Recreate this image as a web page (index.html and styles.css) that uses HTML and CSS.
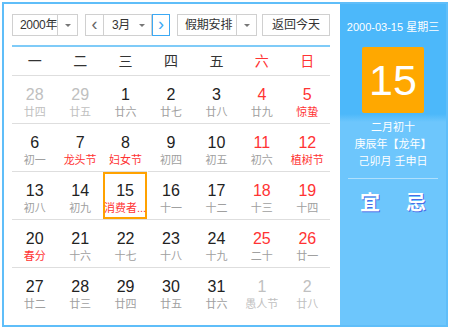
FILE: index.html
```html
<!DOCTYPE html>
<html>
<head>
<meta charset="utf-8">
<link rel="stylesheet" href="styles.css">
</head>
<body>
<div class="cal">
  <div class="main">
    <div class="controls">
      <div class="sel year"><span class="sel-text">2000年</span><span class="arr"></span></div>
      <div class="month-group">
        <span class="nav prev">&lsaquo;</span>
        <div class="sel month"><span class="sel-text">3月</span><span class="arr plain"></span></div>
        <span class="nav next">&rsaquo;</span>
      </div>
      <div class="sel holiday"><span class="sel-text">假期安排</span><span class="arr"></span></div>
      <div class="btn">返回今天</div>
    </div>
    <div class="grid">
      <div class="wk">一</div><div class="wk">二</div><div class="wk">三</div><div class="wk">四</div><div class="wk">五</div><div class="wk red">六</div><div class="wk red">日</div>

      <div class="cell other"><b>28</b><i>廿四</i></div>
      <div class="cell other"><b>29</b><i>廿五</i></div>
      <div class="cell"><b>1</b><i>廿六</i></div>
      <div class="cell"><b>2</b><i>廿七</i></div>
      <div class="cell"><b>3</b><i>廿八</i></div>
      <div class="cell wkend"><b>4</b><i>廿九</i></div>
      <div class="cell wkend"><b>5</b><i class="fest">惊蛰</i></div>

      <div class="cell"><b>6</b><i>初一</i></div>
      <div class="cell"><b>7</b><i class="fest">龙头节</i></div>
      <div class="cell"><b>8</b><i class="fest">妇女节</i></div>
      <div class="cell"><b>9</b><i>初四</i></div>
      <div class="cell"><b>10</b><i>初五</i></div>
      <div class="cell wkend"><b>11</b><i>初六</i></div>
      <div class="cell wkend"><b>12</b><i class="fest">植树节</i></div>

      <div class="cell"><b>13</b><i>初八</i></div>
      <div class="cell"><b>14</b><i>初九</i></div>
      <div class="cell today"><b>15</b><i class="fest">消费者...</i></div>
      <div class="cell"><b>16</b><i>十一</i></div>
      <div class="cell"><b>17</b><i>十二</i></div>
      <div class="cell wkend"><b>18</b><i>十三</i></div>
      <div class="cell wkend"><b>19</b><i>十四</i></div>

      <div class="cell"><b>20</b><i class="fest">春分</i></div>
      <div class="cell"><b>21</b><i>十六</i></div>
      <div class="cell"><b>22</b><i>十七</i></div>
      <div class="cell"><b>23</b><i>十八</i></div>
      <div class="cell"><b>24</b><i>十九</i></div>
      <div class="cell wkend"><b>25</b><i>二十</i></div>
      <div class="cell wkend"><b>26</b><i>廿一</i></div>

      <div class="cell"><b>27</b><i>廿二</i></div>
      <div class="cell"><b>28</b><i>廿三</i></div>
      <div class="cell"><b>29</b><i>廿四</i></div>
      <div class="cell"><b>30</b><i>廿五</i></div>
      <div class="cell"><b>31</b><i>廿六</i></div>
      <div class="cell other"><b>1</b><i>愚人节</i></div>
      <div class="cell other"><b>2</b><i>廿八</i></div>
    </div>
  </div>
  <div class="side">
    <div class="side-date">2000-03-15 星期三</div>
    <div class="big">15</div>
    <div class="lunar">
      <div>二月初十</div>
      <div>庚辰年【龙年】</div>
      <div>己卯月 壬申日</div>
    </div>
    <div class="yiji"><span>宜</span><span>忌</span></div>
  </div>
</div>
</body>
</html>
```

FILE: styles.css
```css
html, body {
  margin: 0;
  padding: 0;
  background: #fff;
}
body {
  font-family: "Liberation Sans", "Noto Sans CJK SC", sans-serif;
  color: #333;
}
.cal {
  margin: 2px;
  width: 446px;
  height: 325px;
  box-sizing: border-box;
  border: 2px solid #5fbef9;
  display: flex;
}
.main {
  width: 336px;
  padding: 10px 0 0 8px;
  box-sizing: border-box;
}
.controls {
  display: flex;
  align-items: center;
  height: 22px;
  width: 318px;
}
.sel {
  display: flex;
  height: 22px;
  box-sizing: border-box;
  border: 1px solid #d0d0d0;
  font-size: 12px;
  line-height: 20px;
  white-space: nowrap;
}
.sel-text {
  flex: 1;
  min-width: 0;
  padding-left: 8px;
  letter-spacing: -0.3px;
}
.arr {
  width: 19px;
  flex: none;
  border-left: 1px solid #d0d0d0;
  position: relative;
}
.arr::after {
  content: "";
  position: absolute;
  left: 7px;
  top: 9px;
  border-left: 3px solid transparent;
  border-right: 3px solid transparent;
  border-top: 3px solid #777;
}
.arr.plain {
  border-left: none;
}
.year { width: 66px; }
.year .sel-text { padding-left: 7px; }
.month-group {
  display: flex;
  margin-left: 7px;
  height: 22px;
}
.nav {
  width: 18px;
  height: 22px;
  box-sizing: border-box;
  border: 1px solid #d0d0d0;
  font-size: 18px;
  line-height: 18px;
  text-align: center;
  color: #666;
}
.nav.next {
  border-color: #3ca9f4;
  color: #3ca9f4;
}
.nav.prev { border-right: none; }
.month {
  width: 49px;
  border-left: 1px solid #d0d0d0;
}
.month .sel-text { padding-left: 8px; }
.month .arr { width: 16px; }
.month .arr::after { left: 4px; }
.holiday {
  width: 80px;
  margin-left: 7px;
}
.holiday .sel-text { padding-left: 7px; letter-spacing: -0.2px; }
.btn {
  margin-left: 5px;
  width: 68px;
  height: 22px;
  box-sizing: border-box;
  border: 1px solid #d0d0d0;
  font-size: 12px;
  line-height: 20px;
  text-align: center;
}
.grid {
  margin-top: 9px;
  width: 318px;
  border-top: 2px solid #7fcbf8;
  display: grid;
  grid-template-columns: repeat(7, 1fr);
  grid-template-rows: 28px repeat(5, 48px);
}
.wk {
  font-size: 14px;
  line-height: 28px;
  text-align: center;
  color: #333;
}
.wk.red { color: #f33; }
.cell {
  border-top: 1px solid #dedede;
  text-align: center;
  padding-top: 9px;
  box-sizing: border-box;
}
.cell b {
  display: block;
  font-weight: normal;
  font-size: 16px;
  line-height: 20px;
  color: #222;
}
.cell i {
  display: block;
  font-style: normal;
  font-size: 11px;
  line-height: 15px;
  color: #a0a0a0;
  white-space: nowrap;
}
.cell.wkend b { color: #f33; }
.cell i.fest { color: #f33; }
.cell.other b, .cell.other i { color: #c0c0c0; }
.cell.today {
  box-shadow: inset 0 0 0 2px #ffa200;
  margin: 0 1px 0 0;
}
.side {
  flex: 1;
  background: linear-gradient(to bottom, #4cb8fa 0, #4cb8fa 110px, #6dc6fc 118px, #6dc6fc 100%);
  color: #fff;
  display: flex;
  flex-direction: column;
  align-items: center;
}
.side-date {
  margin-top: 16px;
  font-size: 11px;
  line-height: 14px;
  white-space: nowrap;
}
.big {
  margin-top: 13px;
  width: 62px;
  height: 66px;
  border-radius: 2px;
  background: #ffa800;
  font-size: 43px;
  line-height: 66px;
  text-align: center;
}
.lunar {
  margin-top: 6px;
  font-size: 11px;
  line-height: 17px;
  text-align: center;
  width: 90px;
  padding-bottom: 8px;
  border-bottom: 1px solid rgba(255,255,255,0.45);
}
.yiji {
  margin-top: 12px;
  display: flex;
  gap: 26px;
  font-size: 20px;
  line-height: 24px;
  font-weight: bold;
  text-shadow: 1px 1px 0 #4a6be6;
}
```
